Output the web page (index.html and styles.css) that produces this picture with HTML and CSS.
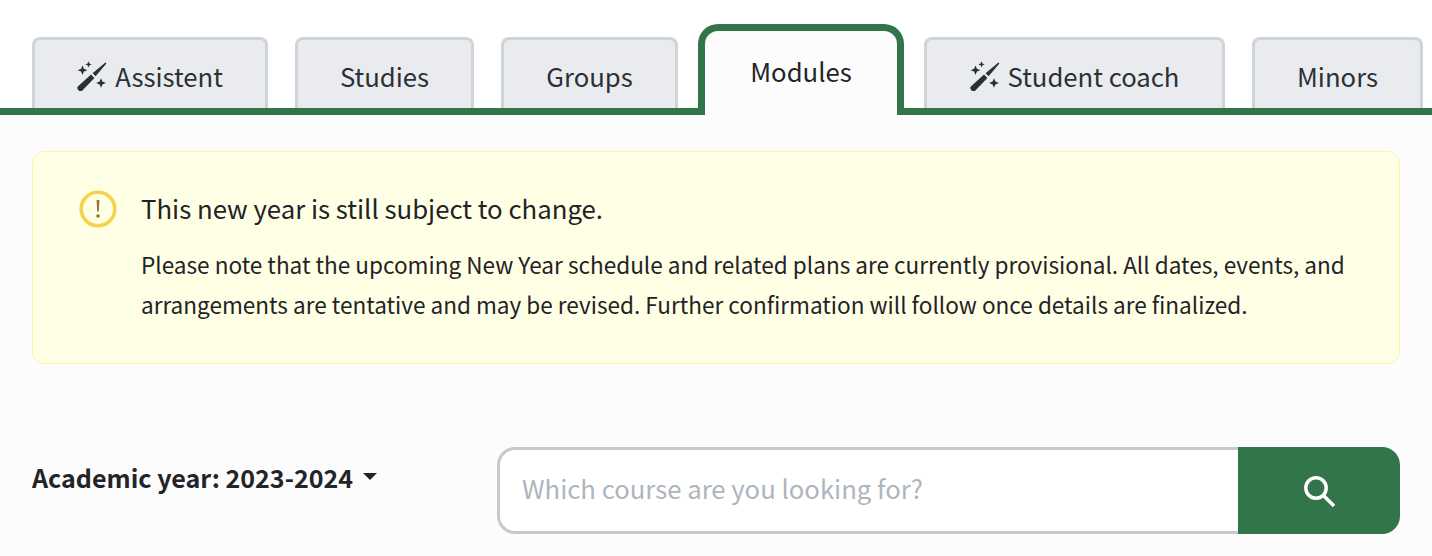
FILE: index.html
```html
<!DOCTYPE html>
<html lang="en">
<head>
  <meta charset="UTF-8">
  <title>Modules</title>
  <meta name="viewport" content="width=device-width, initial-scale=1.0">
  <link rel="stylesheet" href="styles.css">
</head>
<body>
  <svg width="0" height="0" class="icon-defs">
    <symbol id="wand" viewBox="0 0 30 30">
      <path d="M.8 25.4 14 13.6 17.4 17 5.4 29.6C4.2 30.6 2.6 30.4 1.4 29.2.2 28 -.2 26.6.8 25.4Z"/>
      <path d="M15.6 12.2 28.4 1.4 29.4 2.4 18.6 15.2Z"/>
      <path d="M5.5 4.4 6.9 7.8 10.4 9.2 6.9 10.6 5.5 14 4.1 10.6.6 9.2 4.1 7.8Z"/>
      <path d="M11.5 .2 12.4 2.5 14.7 3.4 12.4 4.3 11.5 6.6 10.6 4.3 8.3 3.4 10.6 2.5Z"/>
      <path d="M24 17.2 25.4 20.6 28.9 22 25.4 23.4 24 26.8 22.6 23.4 19.1 22 22.6 20.6Z"/>
    </symbol>
  </svg>

  <div class="tabs">
    <a class="tab tab-assistent" href="#"><svg class="wand"><use href="#wand"/></svg>Assistent</a>
    <a class="tab tab-studies" href="#">Studies</a>
    <a class="tab tab-groups" href="#">Groups</a>
    <a class="tab tab-modules active" href="#">Modules</a>
    <a class="tab tab-coach" href="#"><svg class="wand"><use href="#wand"/></svg>Student coach</a>
    <a class="tab tab-minors" href="#">Minors</a>
  </div>

  <div class="content">
    <div class="notice">
      <svg class="notice-icon" viewBox="0 0 38 38">
        <circle cx="19" cy="19" r="16.8" fill="none" stroke="#f6d34f" stroke-width="3.6"/>
        <path d="M17.6 10h2.8l-.6 11.5h-1.6Z" fill="#94742a"/>
        <circle cx="19" cy="26" r="1.8" fill="#94742a"/>
      </svg>
      <div class="notice-text">
        <div class="notice-title">This new year is still subject to change.</div>
        <p class="notice-body">Please note that the upcoming New Year schedule and related plans are currently provisional. All dates, events, and arrangements are tentative and may be revised. Further confirmation will follow once details are finalized.</p>
      </div>
    </div>

    <div class="filters">
      <a class="year-toggle" href="#">Academic year: 2023-2024<span class="caret"></span></a>
      <form class="search">
        <input class="search-input" type="text" placeholder="Which course are you looking for?">
        <button class="search-btn" type="button" aria-label="Search">
          <svg viewBox="0 0 32 32" width="32" height="32">
            <circle cx="13" cy="13" r="10.2" fill="none" stroke="#fff" stroke-width="3.5"/>
            <path d="M20.5 20.5 31 31" fill="none" stroke="#fff" stroke-width="3.5"/>
          </svg>
        </button>
      </form>
    </div>
  </div>
</body>
</html>
```

FILE: styles.css
```css
* {
  margin: 0;
  padding: 0;
  box-sizing: border-box;
}
body {
  font-family: "Noto Sans CJK SC", "Noto Sans", sans-serif;
  background: #fff;
  color: #212529;
  overflow: hidden;
}
.icon-defs {
  display: block;
  height: 0;
}
/* Tab row */
.tabs {
  display: flex;
  align-items: flex-end;
  height: 115px;
  padding-left: 32px;
  border-bottom: 7px solid #32754b;
}
.tab {
  display: flex;
  align-items: center;
  justify-content: center;
  height: 71px;
  margin-right: 27px;
  padding-top: 3px;
  background: #e9ebef;
  border: 3px solid #ced4d8;
  border-bottom: 0;
  border-radius: 8px 8px 0 0;
  color: #2b3035;
  font-size: 25.7px;
  line-height: 36px;
  text-decoration: none;
}
.tab-assistent { width: 236px; }
.tab-studies { width: 179px; }
.tab-groups { width: 177px; margin-right: 20px; }
.tab-modules { width: 206px; margin-right: 20px; }
.tab-coach { width: 301px; }
.tab-minors { width: 171px; margin-right: 0; }
.tab.active {
  height: 91px;
  margin-bottom: -7px;
  padding-top: 0;
  padding-bottom: 5px;
  background: #fcfcfd;
  border: 7px solid #32754b;
  border-bottom: 0;
  border-radius: 20px 20px 0 0;
  color: #212529;
}
.wand {
  width: 30px;
  height: 30px;
  margin-right: 8px;
  fill: #2b3035;
}
/* Page body */
.content {
  height: 441px;
  padding: 36px 32px 0;
  background: #fcfcfd;
}
.notice {
  display: flex;
  height: 213px;
  padding: 36px 46px 0;
  background: #ffffe6;
  border: 1px solid #fdf3a8;
  border-radius: 12px;
}
.notice-icon {
  flex: none;
  width: 38px;
  height: 38px;
  margin: 2px 24px 0 0;
}
.notice-title {
  font-size: 25.75px;
  line-height: 40px;
  color: #1f2326;
}
.notice-body {
  width: 1240px;
  margin-top: 17px;
  font-size: 22.57px;
  line-height: 40px;
  color: #1f2326;
}
.filters {
  display: flex;
  align-items: flex-start;
  margin-top: 83px;
}
.year-toggle {
  display: flex;
  align-items: center;
  width: 465px;
  margin-top: 10px;
  font-size: 25.07px;
  font-weight: 700;
  line-height: 40px;
  color: #212529;
  text-decoration: none;
}
.caret {
  width: 0;
  height: 0;
  margin: 0 0 2px 10px;
  border-top: 7px solid #212529;
  border-left: 7px solid transparent;
  border-right: 7px solid transparent;
}
.search {
  display: flex;
  flex: 1;
  height: 87px;
}
.search-input {
  flex: 1;
  min-width: 0;
  padding: 0 0 7px 22px;
  background: #fff;
  border: 3px solid #c6c9cd;
  border-right: 0;
  border-radius: 18px 0 0 18px;
  font-family: inherit;
  font-size: 25.7px;
  color: #212529;
  outline: none;
}
.search-input::placeholder {
  color: #adb5bd;
}
.search-btn {
  display: flex;
  align-items: center;
  justify-content: center;
  width: 162px;
  background: #32754b;
  border: 0;
  border-radius: 0 18px 18px 0;
}
```
